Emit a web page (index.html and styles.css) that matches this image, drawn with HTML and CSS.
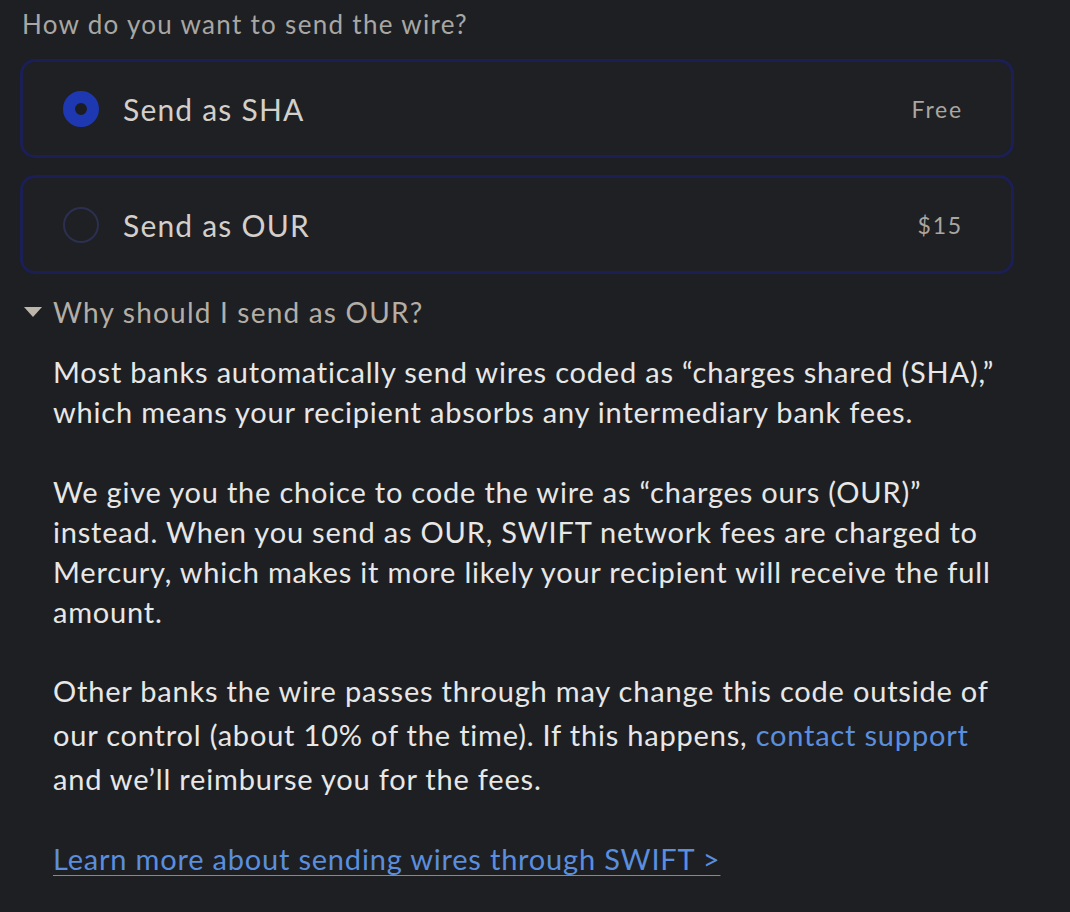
FILE: index.html
```html
<!DOCTYPE html>
<html lang="en">
<head>
<meta charset="utf-8">
<title>Send wire</title>
<link rel="stylesheet" href="styles.css">
</head>
<body>
<div class="page">
  <div class="question">How do you want to send the wire?</div>
  <div class="options">
    <label class="option">
      <span class="radio radio-on"></span>
      <span class="option-label">Send as SHA</span>
      <span class="option-fee">Free</span>
    </label>
    <label class="option">
      <span class="radio"></span>
      <span class="option-label">Send as OUR</span>
      <span class="option-fee">$15</span>
    </label>
  </div>
  <div class="disclosure">
    <span class="caret"></span>
    <span class="disclosure-title">Why should I send as OUR?</span>
  </div>
  <div class="explain">
    <p class="para">Most banks automatically send wires coded as “charges shared (SHA),” which means your recipient absorbs any intermediary bank fees.</p>
    <p class="para">We give you the choice to code the wire as “charges ours (OUR)” instead. When you send as OUR, SWIFT network fees are charged to Mercury, which makes it more likely your recipient will receive the full amount.</p>
    <p class="para para-tall">Other banks the wire passes through may change this code outside of our control (about 10% of the time). If this happens, <a class="link" href="#">contact support</a> and we’ll reimburse you for the fees.</p>
    <p class="para learn"><a class="link underline" href="#">Learn more about sending wires through SWIFT &gt;</a></p>
  </div>
</div>
</body>
</html>
```

FILE: styles.css
```css
html, body {
  margin: 0;
  padding: 0;
  background: #1e1f22;
}

body {
  font-family: "Lato", "Noto Sans", sans-serif;
  width: 1070px;
  height: 912px;
  overflow: hidden;
}

.page {
  padding: 5px 0 0 20px;
  width: 994px;
}

.question {
  font-size: 26px;
  line-height: 38px;
  color: #a9a7a4;
  padding-left: 2px;
  letter-spacing: 1.3px;
}

.options {
  display: flex;
  flex-direction: column;
  gap: 17px;
  margin-top: 16px;
}

.option {
  display: flex;
  align-items: center;
  height: 93px;
  border: 3px solid #1b1f56;
  border-radius: 15px;
  background: #1f2023;
  padding: 0 50px 0 40px;
}

.radio {
  width: 32px;
  height: 32px;
  border-radius: 50%;
  border: 2px solid #2c2f4f;
  box-sizing: content-box;
  flex: none;
}

.radio-on {
  width: 12px;
  height: 12px;
  border: 12px solid #1e38b2;
  background: #1c1d22;
}

.option-label {
  margin-left: 24px;
  font-size: 30px;
  color: #d3cfca;
  letter-spacing: 1.2px;
  flex: 1;
}

.option-fee {
  font-size: 23px;
  color: #aaa6a0;
  letter-spacing: 1.8px;
  margin-right: -2px;
}

.disclosure {
  display: flex;
  align-items: center;
  margin-top: 20px;
  height: 36px;
}

.caret {
  width: 0;
  height: 0;
  border-left: 9px solid transparent;
  border-right: 9px solid transparent;
  border-top: 10px solid #bdb6ab;
  margin-left: 4px;
  margin-right: 11px;
}

.disclosure-title {
  font-size: 28px;
  color: #b3aea6;
  letter-spacing: 1.2px;
}

.explain {
  padding-left: 33px;
  margin-top: 22px;
}

.para {
  margin: 0 0 40px 0;
  font-size: 29px;
  line-height: 40px;
  color: #e7e7e7;
  letter-spacing: 0.8px;
  max-width: 958px;
}

.para-tall {
  line-height: 44px;
  margin-top: -3px;
  margin-bottom: 38px;
}

.link {
  color: #5a8ede;
  text-decoration: none;
}

.underline {
  text-decoration: underline;
  text-decoration-thickness: 1px;
  text-underline-offset: 5px;
}
```
